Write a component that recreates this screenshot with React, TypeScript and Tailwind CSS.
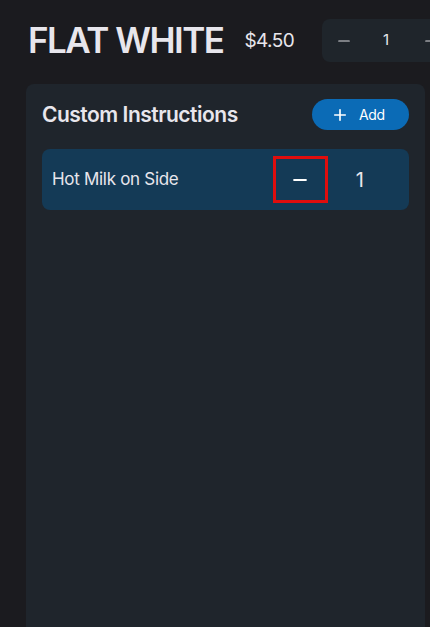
import { Minus, Plus } from "lucide-react";

const font = { fontFamily: 'Inter, "Liberation Sans", Arial, sans-serif' };

export default function App() {
  return (
    <div className="h-[627px] w-[430px] overflow-hidden bg-[#1b1b1f] text-[#e8e6ec]" style={font}>
      <div className="flex w-[520px] items-center pl-[28px] pt-[19px]">
        <h1 className="text-[35px] font-semibold leading-none tracking-[-1.5px]">FLAT WHITE</h1>
        <span className="ml-[21px] text-[19px] leading-none tracking-[-0.6px]">$4.50</span>
        <div className="ml-[28px] flex h-[43px] w-[150px] items-center rounded-[8px] bg-[#1f252b] pl-[13px]">
          <Minus size={18} strokeWidth={1.6} className="text-[#d9d9de]" />
          <span className="ml-[30px] text-[15px]">1</span>
          <Plus size={18} strokeWidth={1.6} className="ml-[33px] text-[#d9d9de]" />
        </div>
      </div>

      <div className="ml-[26px] mt-[22px] h-[600px] w-[399px] rounded-[8px] bg-[#1f252c] px-[16px] pt-[15px]">
        <div className="flex items-center justify-between">
          <h2 className="text-[21px] font-semibold leading-none tracking-[-0.5px]">Custom Instructions</h2>
          <button
            type="button"
            className="flex h-[31px] w-[97px] items-center rounded-full bg-[#0b6bb6] pl-[19px] text-[14px] text-white"
          >
            <Plus size={18} strokeWidth={2.2} />
            <span className="ml-[10px] tracking-[-0.4px]">Add</span>
          </button>
        </div>

        <div className="mt-[19px] flex h-[61px] items-center rounded-[8px] bg-[#143a56] pl-[10px]">
          <span className="text-[17px] tracking-[-0.3px]">Hot Milk on Side</span>
          <div className="ml-auto flex h-[47px] w-[55px] items-center justify-center border-[3px] border-[#e00d0d]">
            <Minus size={20} strokeWidth={2.6} className="text-white" />
          </div>
          <span className="ml-[28px] mr-[45px] text-[20px]">1</span>
        </div>
      </div>
    </div>
  );
}
